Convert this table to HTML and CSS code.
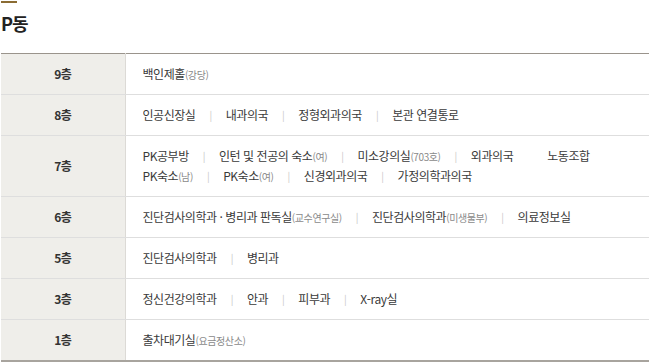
FILE: index.html
```html
<!DOCTYPE html>
<html lang="ko">
<head>
<meta charset="utf-8">
<link rel="stylesheet" href="styles.css">
</head>
<body>
<div class="page">
  <div class="accent"></div>
  <h2 class="title">P동</h2>
  <table class="floors">
    <tr>
      <th>9층</th>
      <td><div class="list"><span>백인제홀<small>(강당)</small></span></div></td>
    </tr>
    <tr>
      <th>8층</th>
      <td><div class="list"><span>인공신장실</span><i>|</i><span>내과의국</span><i>|</i><span>정형외과의국</span><i>|</i><span>본관 연결통로</span></div></td>
    </tr>
    <tr>
      <th>7층</th>
      <td>
        <div class="list"><span>PK공부방</span><i>|</i><span>인턴 및 전공의 숙소<small>(여)</small></span><i>|</i><span>미소강의실<small>(703호)</small></span><i>|</i><span>외과의국</span><span class="far">노동조합</span></div>
        <div class="list"><span>PK숙소<small>(남)</small></span><i>|</i><span>PK숙소<small>(여)</small></span><i>|</i><span>신경외과의국</span><i>|</i><span>가정의학과의국</span></div>
      </td>
    </tr>
    <tr>
      <th>6층</th>
      <td><div class="list"><span>진단검사의학과 · 병리과 판독실<small>(교수연구실)</small></span><i>|</i><span>진단검사의학과<small>(미생물부)</small></span><i>|</i><span>의료정보실</span></div></td>
    </tr>
    <tr>
      <th>5층</th>
      <td><div class="list"><span>진단검사의학과</span><i>|</i><span>병리과</span></div></td>
    </tr>
    <tr>
      <th>3층</th>
      <td><div class="list"><span>정신건강의학과</span><i>|</i><span>안과</span><i>|</i><span>피부과</span><i>|</i><span>X-ray실</span></div></td>
    </tr>
    <tr>
      <th>1층</th>
      <td><div class="list"><span>출차대기실<small>(요금정산소)</small></span></div></td>
    </tr>
  </table>
</div>
</body>
</html>
```
FILE: styles.css
```css
* { box-sizing: border-box; }
html, body { margin: 0; padding: 0; background: #fff; }
body {
  font-family: "Noto Sans CJK KR", "Noto Sans", sans-serif;
  color: #333;
}
.page { padding: 1px 0 0 1px; }
.accent {
  width: 16px;
  height: 2px;
  background: #8b6c33;
}
.title {
  margin: 8px 0 0 0;
  font-size: 18px;
  line-height: 24px;
  font-weight: 700;
  color: #222;
  letter-spacing: -1px;
}
.floors {
  margin-top: 18px;
  width: 648px;
  border-collapse: collapse;
  border-top: 1px solid #9a948c;
  border-bottom: 2px solid #a8a49e;
}
.floors th {
  width: 124px;
  height: 41px;
  background: #efeeea;
  border-right: 1px solid #dcdad6;
  border-bottom: 1px solid #dedede;
  font-size: 12px;
  line-height: 20px;
  font-weight: 700;
  color: #333;
  text-align: center;
  vertical-align: middle;
  padding: 0;
  letter-spacing: -0.6px;
}
.floors td {
  border-bottom: 1px solid #dedede;
  padding: 10px 0 10px 17px;
  vertical-align: middle;
  font-size: 12px;
  line-height: 20px;
  color: #3a3a3a;
  letter-spacing: -0.45px;
}
.floors tr:last-child th,
.floors tr:last-child td { border-bottom: 0; }
.list {
  display: flex;
  align-items: center;
  white-space: nowrap;
  height: 20px;
  overflow: hidden;
}
.list span { line-height: 20px; }
.list i {
  font-style: normal;
  color: #c8c8c8;
  font-size: 10px;
  line-height: 20px;
  margin: 0 14px;
}
.list small {
  font-size: 10px;
  line-height: 1;
  color: #8a8a8a;
  letter-spacing: -0.4px;
}
.list .far { margin-left: 34px; }
```
